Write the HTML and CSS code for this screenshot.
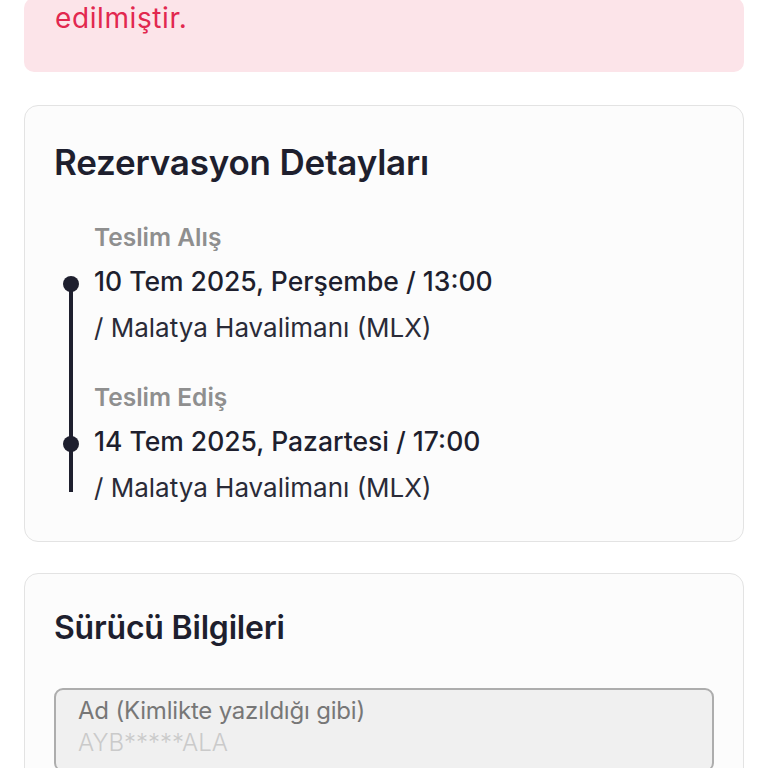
FILE: index.html
```html
<!DOCTYPE html>
<html lang="tr">
<head>
    <meta charset="UTF-8">
    <meta name="viewport" content="width=device-width, initial-scale=1.0">
    <title>Rezervasyon</title>
    <link rel="stylesheet" href="styles.css">
</head>
<body>

    <div class="page">
        <div class="alert">
            <p>edilmiştir.</p>
        </div>

        <div class="card">
            <h2 class="card-title">Rezervasyon Detayları</h2>
            <div class="timeline">
                <div class="stop">
                    <div class="stop-label">Teslim Alış</div>
                    <div class="stop-date">10 Tem 2025, Perşembe / 13:00</div>
                    <div class="stop-place">/ Malatya Havalimanı (MLX)</div>
                </div>
                <div class="stop">
                    <div class="stop-label">Teslim Ediş</div>
                    <div class="stop-date">14 Tem 2025, Pazartesi / 17:00</div>
                    <div class="stop-place">/ Malatya Havalimanı (MLX)</div>
                </div>
            </div>
        </div>

        <div class="card">
            <h2 class="card-title small">Sürücü Bilgileri</h2>
            <div class="field">
                <label class="field-label">Ad (Kimlikte yazıldığı gibi)</label>
                <div class="field-value">AYB*****ALA</div>
            </div>
        </div>
    </div>

</body>
</html>
```

FILE: styles.css
```css
body {
    margin: 0;
    background-color: #ffffff;
    font-family: Inter, 'Noto Sans', sans-serif;
    color: #1e1f2e;
    overflow: hidden;
}

.page {
    padding: 0 24px;
}

.alert {
    background-color: #fce4e9;
    border-radius: 10px;
    padding: 0 31px 34px;
    margin-top: -2px;
}

.alert p {
    margin: 0;
    font-size: 28px;
    line-height: 40px;
    font-weight: 400;
    letter-spacing: 0.6px;
    color: #e2284f;
}

.card {
    background-color: #fcfcfc;
    border: 1px solid #e3e3e3;
    border-radius: 14px;
    padding: 36px 29px 28px;
    margin-top: 33px;
}

.card + .card {
    margin-top: 31px;
    padding-top: 34px;
}

.card-title {
    margin: 0;
    font-size: 35px;
    line-height: 40px;
    font-weight: 600;
    letter-spacing: -0.2px;
}

.card-title.small {
    font-size: 32px;
}

.timeline {
    position: relative;
    margin-top: 33px;
    padding-left: 40px;
}

.timeline::before {
    content: '';
    position: absolute;
    left: 15px;
    top: 66px;
    bottom: 21px;
    width: 4px;
    background-color: #1e1f2e;
}

.stop + .stop {
    margin-top: 22px;
}

.stop-label {
    font-size: 24.5px;
    line-height: 44px;
    font-weight: 600;
    color: #8f8f8f;
}

.stop-date {
    position: relative;
    font-size: 26.5px;
    line-height: 44px;
    font-weight: 500;
}

.stop-date::before {
    content: '';
    position: absolute;
    left: -31px;
    top: 17px;
    width: 16px;
    height: 16px;
    border-radius: 50%;
    background-color: #1e1f2e;
}

.stop-place {
    font-size: 26px;
    line-height: 50px;
    font-weight: 400;
    color: #2a2b38;
}

.field {
    margin-top: 40px;
    background-color: #f0f0f0;
    border: 2px solid #adadad;
    border-radius: 9px;
    padding: 6px 22px 10px;
}

.field-label {
    display: block;
    font-size: 24px;
    line-height: 30px;
    color: #777777;
    letter-spacing: -0.2px;
}

.field-value {
    font-size: 24px;
    line-height: 34px;
    font-weight: 300;
    color: #cacaca;
}
```
